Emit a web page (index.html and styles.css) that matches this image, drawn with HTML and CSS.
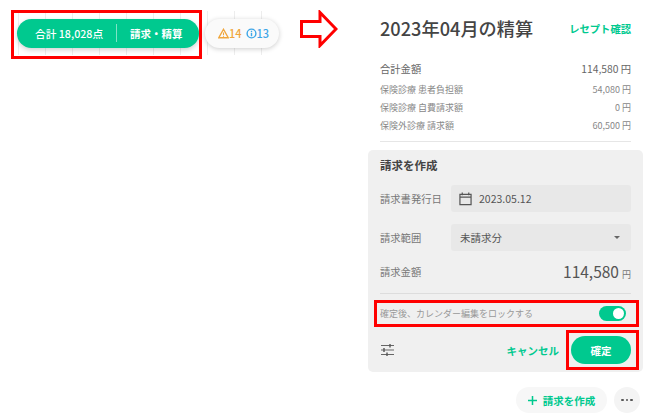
FILE: index.html
```html
<!DOCTYPE html>
<html lang="ja">
<head>
<meta charset="utf-8">
<title>精算</title>
<link rel="stylesheet" href="styles.css">
</head>
<body>
<div class="page">
  <section class="left">
    <div class="strip">
      <div class="total-pill mark mark-a">
        <span class="total">合計 18,028点</span>
        <span class="sep"></span>
        <span class="bill">請求・精算</span>
      </div>
      <div class="alert-pill">
        <svg class="ico" viewBox="0 0 14 14"><path d="M7 1.6 13 12.4H1Z" fill="none" stroke="#f0a63c" stroke-width="1.7"/><path d="M7 5.600v3.400M7 10v1.200" stroke="#f0a63c" stroke-width="1.4"/></svg>
        <span class="warn">14</span>
        <svg class="ico ico-i" viewBox="0 0 14 14"><circle cx="7" cy="7" r="5.6" fill="none" stroke="#3ea6e8" stroke-width="1.8"/><path d="M7 3.600v1.500M7 6v4.400" stroke="#3ea6e8" stroke-width="1.8"/></svg>
        <span class="info">13</span>
      </div>
    </div>
    <svg class="arrow" viewBox="0 0 38 38"><path d="M1.5 11.5H20V2.5L36 19 20 35.5V26.5H1.5Z" fill="#fff" stroke="#f00" stroke-width="3"/></svg>
  </section>

  <section class="panel">
    <header class="head">
      <h1>2023年04月の精算</h1>
      <a class="link">レセプト確認</a>
    </header>
    <div class="rows">
      <div class="row row-main"><span>合計金額</span><span>114,580 円</span></div>
      <div class="row"><span>保険診療 患者負担額</span><span>54,080 円</span></div>
      <div class="row"><span>保険診療 自費請求額</span><span>0 円</span></div>
      <div class="row"><span>保険外診療 請求額</span><span>60,500 円</span></div>
    </div>
    <div class="card">
      <h2>請求を作成</h2>
      <div class="field">
        <span class="label">請求書発行日</span>
        <div class="control">
          <svg class="cal" viewBox="0 0 14 15"><path d="M1 3h12v11H1ZM1 6h12M3.500 1v3M10.500 1v3" fill="none" stroke="#555" stroke-width="1.3"/></svg>
          <span>2023.05.12</span>
        </div>
      </div>
      <div class="field">
        <span class="label">請求範囲</span>
        <div class="control select">
          <span>未請求分</span>
          <span class="caret"></span>
        </div>
      </div>
      <div class="amount">
        <span class="label">請求金額</span>
        <span class="value">114,580<small>円</small></span>
      </div>
      <div class="lock mark mark-b">
        <span>確定後、カレンダー編集をロックする</span>
        <span class="toggle"><span class="knob"></span></span>
      </div>
      <div class="actions">
        <svg class="tune" viewBox="0 0 13 12"><path d="M0 1.500H13M0 6H13M0 10.500H13" fill="none" stroke="#666" stroke-width="1"/><path d="M9 0v3.500M3 4v4M6 8.500V12" fill="none" stroke="#555" stroke-width="1.400"/></svg>
        <a class="cancel">キャンセル</a>
        <span class="confirm mark mark-c">確定</span>
      </div>
    </div>
    <div class="foot">
      <span class="create"><svg class="plus" viewBox="0 0 10 10"><path d="M5 0v10M0 5h10" stroke="#00c98f" stroke-width="1.7"/></svg>請求を作成</span>
      <span class="more"><i></i><i></i><i></i></span>
    </div>
  </section>
</div>
</body>
</html>
```

FILE: styles.css
```css
* { box-sizing: border-box; }
html, body { margin: 0; padding: 0; background: #fff; }
body { font-family: "Noto Sans CJK JP", "Noto Sans", sans-serif; color: #444; overflow: hidden; }
.page { display: flex; width: 655px; height: 420px; }

.left { width: 368px; flex: none; display: flex; align-items: flex-start; padding: 11px 0 0 17px; }
.strip {
  width: 266px; height: 44px; display: flex; align-items: center; gap: 6px;
  background: linear-gradient(90deg, transparent 26px, #ededed 26px) 2px 0 / 27px 100%;
}
.mark { position: relative; }
.mark::after { content: ""; position: absolute; border: 3px solid #f00; pointer-events: none; }
.mark-a::after { left: -6px; right: -3px; top: -9px; bottom: -11px; }
.mark-b::after { left: -6px; right: -8px; top: 0; bottom: 0; }
.mark-c::after { left: -5px; right: -8px; top: -6px; bottom: -6px; }

.total-pill {
  width: 182px; height: 29px; border-radius: 15px; background: #00c98f; color: #fff;
  display: flex; align-items: center; font-size: 10.700px; font-weight: 500; padding-left: 18px;
  box-shadow: 0 2px 5px rgba(0,0,0,.18);
}
.total { width: 80px; white-space: nowrap; }
.sep { width: 1px; height: 18px; background: #7fe3c6; margin: 0 13px 0 1px; }
.bill { font-size: 10.500px; font-weight: 700; white-space: nowrap; }
.alert-pill {
  width: 74px; height: 29px; border-radius: 15px; background: #fafafa;
  display: flex; align-items: center; padding-left: 13px; font-size: 11px; font-weight: 500;
  box-shadow: 0 1px 5px rgba(0,0,0,.2);
}
.ico { width: 11px; height: 11px; flex: none; }
.ico-i { margin-left: 4px; }
.warn { color: #f0a63c; }
.info { color: #3ea6e8; }
.arrow { width: 38px; height: 38px; flex: none; margin: -1px 0 0 17px; }

.panel { width: 275px; flex: none; display: flex; flex-direction: column; }
.head { display: flex; justify-content: space-between; align-items: center; height: 28px; margin: 14px 12px 0 12px; }
h1 { margin: 0; font-size: 18.200px; font-weight: 500; color: #444; line-height: 28px; white-space: nowrap; }
.link { color: #00c98f; font-size: 10.300px; font-weight: 700; white-space: nowrap; }
.rows { margin: 16px 12px 0; padding-bottom: 7px; border-bottom: 1px solid #e6e6e6; }
.row { display: flex; justify-content: space-between; align-items: center; height: 18px; font-size: 9px; color: #888; }
.row-main { height: 20px; margin-bottom: 2px; font-size: 10.300px; color: #666; }
.card { margin-top: 8px; height: 222px; background: #f0f0f0; border-radius: 5px; padding: 6px 12px 0; display: flex; flex-direction: column; }
h2 { margin: 0; font-size: 11.500px; font-weight: 700; color: #444; line-height: 18px; }
.field { display: flex; align-items: center; height: 27px; margin-top: 12px; }
.field:first-of-type { margin-top: 11px; }
.label { width: 71px; flex: none; font-size: 10.300px; color: #777; }
.control { flex: 1; height: 27px; background: #e8e8e8; border-radius: 3px; display: flex; align-items: center; padding: 0 9px; font-size: 10.500px; color: #555; }
.cal { width: 13px; height: 15px; margin: 0 7px 0 -1px; flex: none; }
.select { justify-content: space-between; padding-right: 11px; }
.caret { width: 0; height: 0; border: 3px solid transparent; border-top: 3px solid #666; border-bottom: 0; }
.amount { display: flex; align-items: center; justify-content: space-between; height: 28px; margin-top: 6px; }
.value { font-size: 15.500px; color: #555; }
.value small { font-size: 9px; color: #777; margin-left: 3px; }
.lock { display: flex; align-items: center; justify-content: space-between; height: 27px; margin-top: 15px; font-size: 9px; color: #999; padding-right: 5px; }
.lock::before { content: ""; position: absolute; left: 0; right: 0; top: -7px; border-top: 1px solid #ddd; }
.toggle { width: 27px; height: 15px; border-radius: 8px; background: #00c98f; display: flex; align-items: center; justify-content: flex-end; padding-right: 2px; }
.knob { width: 11px; height: 11px; border-radius: 50%; background: #fff; }
.actions { display: flex; align-items: center; margin-top: 9px; height: 28px; }
.tune { width: 13px; height: 12px; margin-left: 1px; }
.cancel { margin-left: auto; color: #00c98f; font-size: 10.500px; font-weight: 700; white-space: nowrap; }
.confirm { width: 60px; height: 28px; margin-left: 12px; border-radius: 14px; background: #00c98f; color: #fff; font-size: 10.500px; font-weight: 700; display: flex; align-items: center; justify-content: center; }
.foot { display: flex; justify-content: flex-end; align-items: center; gap: 7px; margin: 15px 3px 0 0; }
.create { width: 91px; height: 26px; border-radius: 13px; background: #f7f7f7; color: #00c98f; font-size: 10.500px; font-weight: 700; display: flex; align-items: center; justify-content: center; gap: 6px; }
.plus { width: 9px; height: 9px; }
.more { width: 26px; height: 26px; border-radius: 50%; background: #f4f4f4; display: flex; align-items: center; justify-content: center; gap: 2px; }
.more i { width: 2.500px; height: 2.500px; border-radius: 50%; background: #555; }
```
